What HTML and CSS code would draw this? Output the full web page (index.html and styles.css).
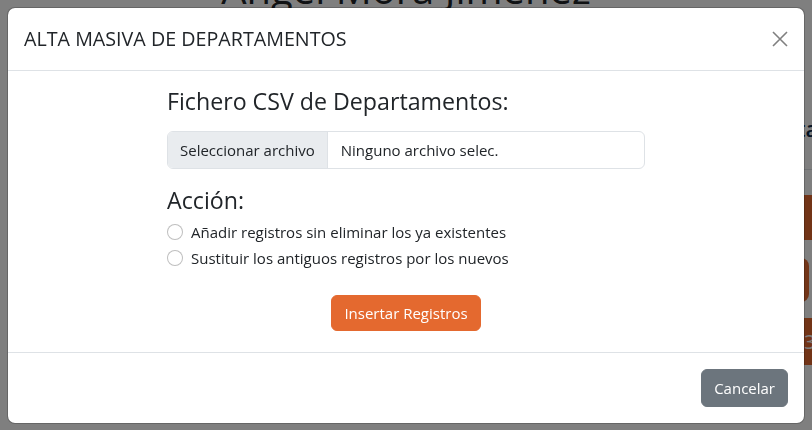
FILE: index.html
```html
<!DOCTYPE html>
<html lang="es">
<head>
<meta charset="utf-8">
<title>Alta masiva de departamentos</title>
<link rel="stylesheet" href="styles.css">
</head>
<body>
  <div class="page">
    <h1 class="page-title">Angel Mora Jimenez</h1>
    <div class="page-row">
      <div class="side">
        <div class="side-head">Departamento</div>
        <div class="side-band"></div>
        <div class="side-btn"></div>
        <div class="side-band side-band-text">3</div>
      </div>
    </div>
  </div>

  <div class="backdrop"></div>

  <div class="modal">
    <div class="modal-dialog">
      <div class="modal-content">
        <div class="modal-header">
          <h5 class="modal-title">ALTA MASIVA DE DEPARTAMENTOS</h5>
          <button class="btn-close" type="button" aria-label="Cerrar">
            <svg viewBox="0 0 16 16" width="16" height="16"><path d="M1 1L15 15M15 1L1 15" stroke="#808080" stroke-width="1.6" fill="none"/></svg>
          </button>
        </div>
        <div class="modal-body">
          <div class="form-col">
            <h4 class="section-title">Fichero CSV de Departamentos:</h4>
            <div class="file-input">
              <span class="file-btn">Seleccionar archivo</span>
              <span class="file-name">Ninguno archivo selec.</span>
            </div>
            <h4 class="section-title action-title">Acción:</h4>
            <div class="form-check">
              <span class="radio"></span>
              <span class="check-label">Añadir registros sin eliminar los ya existentes</span>
            </div>
            <div class="form-check">
              <span class="radio"></span>
              <span class="check-label">Sustituir los antiguos registros por los nuevos</span>
            </div>
            <div class="actions">
              <button class="btn btn-orange" type="button">Insertar Registros</button>
            </div>
          </div>
        </div>
        <div class="modal-footer">
          <button class="btn btn-secondary" type="button">Cancelar</button>
        </div>
      </div>
    </div>
  </div>
</body>
</html>
```
FILE: styles.css
```css
* { box-sizing: border-box; }
html, body { margin: 0; padding: 0; }
body {
  font-family: "Open Sans", "Noto Sans", sans-serif;
  font-size: 15px;
  line-height: 24px;
  color: #212529;
  background: #fff;
  overflow: hidden;
}

/* background page */
.page { height: 430px; overflow: hidden; }
.page-title {
  margin: -35px 0 0;
  text-align: center;
  font-size: 40px;
  line-height: 48px;
  font-weight: 500;
  color: #212529;
}
.page-row { display: flex; justify-content: flex-end; }
.side { width: 120px; margin-right: -40px; display: flex; flex-direction: column; }
.side-head {
  margin-top: 100px;
  padding-bottom: 26px;
  font-size: 22px;
  line-height: 30px;
  font-weight: 600;
  border-bottom: 1px solid #dee2e6;
  white-space: nowrap;
  color: #0d2a4a;
}
.side-band { margin-top: 25px; height: 45px; background: #e4692f; }
.side-btn { margin-top: 18px; height: 44px; margin-right: 43px; background: #e4692f; border-radius: 8px; }
.side-band-text { margin-top: 16px; height: 47px; color: #fff; font-size: 20px; line-height: 47px; padding-left: 72px; }

/* overlay */
.backdrop { position: fixed; inset: 0; background: rgba(0,0,0,.5); }
.modal { position: fixed; inset: 0; display: flex; align-items: flex-start; }
.modal-dialog { margin: 7px; width: 100%; }
.modal-content {
  background: #fff;
  border: 1px solid rgba(0,0,0,.2);
  border-radius: 8px;
  display: flex;
  flex-direction: column;
  background-clip: padding-box;
}
.modal-header {
  display: flex;
  align-items: center;
  justify-content: space-between;
  padding: 16px;
  border-bottom: 1px solid #dee2e6;
}
.modal-title { margin: 0; font-size: 19.7px; line-height: 30px; font-weight: 400; }
.btn-close {
  width: 16px; height: 16px; padding: 0; border: 0; background: none;
  display: flex; cursor: pointer;
}
.btn-close svg { display: block; }

.modal-body { padding: 16px; }
.form-col { width: 478px; margin: 0 auto; display: flex; flex-direction: column; }
.section-title { margin: 0 0 15px; font-size: 23.2px; line-height: 28.8px; font-weight: 500; }
.action-title { margin-bottom: 5px; }

.file-input {
  display: flex;
  align-items: center;
  height: 38px;
  border: 1px solid #dee2e6;
  border-radius: 6px;
  overflow: hidden;
  margin-bottom: 17px;
}
.file-btn {
  height: 100%;
  display: flex;
  align-items: center;
  padding: 0 12px;
  background: #e9ecef;
  border-right: 1px solid #dee2e6;
}
.file-name { padding-left: 13px; }

.form-check {
  display: flex;
  align-items: flex-start;
  min-height: 24px;
  margin-bottom: 2px;
}
.radio {
  width: 16px; height: 16px;
  margin-top: 4px;
  margin-right: 8px;
  border: 1px solid rgba(0,0,0,.25);
  border-radius: 50%;
  background: #fff;
  flex: none;
}

.actions { display: flex; justify-content: center; margin: 23px 0 5px; }
.btn {
  font-family: inherit;
  font-size: 15px;
  line-height: 24px;
  padding: 5px 12px;
  border: 1px solid transparent;
  border-radius: 6px;
  color: #fff;
  cursor: pointer;
}
.btn-orange { background: #e4692f; border-color: #e4692f; }
.btn-secondary { background: #6c757d; border-color: #6c757d; padding: 6px 12px; }

.modal-footer {
  display: flex;
  justify-content: flex-end;
  padding: 12px;
  border-top: 1px solid #dee2e6;
}
.modal-footer .btn { margin: 4px; }
```
